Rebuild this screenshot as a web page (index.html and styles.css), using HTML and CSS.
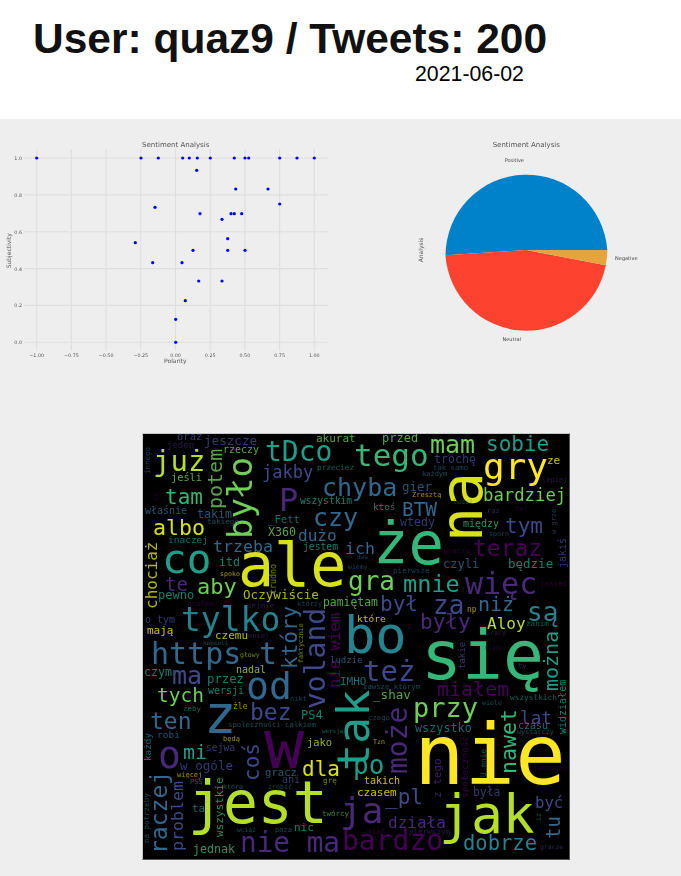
FILE: index.html
```html
<!DOCTYPE html>
<html lang="pl">
<head>
<meta charset="utf-8">
<title>User: quaz9 / Tweets: 200</title>
<link rel="stylesheet" href="styles.css">
</head>
<body>
<header class="head">
  <h1 class="title">User: quaz9 / Tweets: 200</h1>
  <div class="date">2021-06-02</div>
</header>
<main class="panel">
  <section class="charts">
    <svg class="chart" width="340" height="258" viewBox="0 119 340 258">
      <g class="grid">
        <line x1="36.7" y1="149" x2="36.7" y2="351"/><line x1="71.4" y1="149" x2="71.4" y2="351"/><line x1="106.1" y1="149" x2="106.1" y2="351"/><line x1="140.8" y1="149" x2="140.8" y2="351"/><line x1="175.5" y1="149" x2="175.5" y2="351"/><line x1="210.2" y1="149" x2="210.2" y2="351"/><line x1="244.9" y1="149" x2="244.9" y2="351"/><line x1="279.6" y1="149" x2="279.6" y2="351"/><line x1="314.3" y1="149" x2="314.3" y2="351"/>
        <line x1="24" y1="158" x2="328" y2="158"/><line x1="24" y1="194.9" x2="328" y2="194.9"/><line x1="24" y1="231.7" x2="328" y2="231.7"/><line x1="24" y1="268.6" x2="328" y2="268.6"/><line x1="24" y1="305.4" x2="328" y2="305.4"/><line x1="24" y1="342.3" x2="328" y2="342.3"/>
      </g>
      <text class="plot-title" x="175.7" y="146.8">Sentiment Analysis</text>
      <g class="tick tick-x">
        <text x="36.7" y="356.8">−1.00</text><text x="71.4" y="356.8">−0.75</text><text x="106.1" y="356.8">−0.50</text><text x="140.8" y="356.8">−0.25</text><text x="175.5" y="356.8">0.00</text><text x="210.2" y="356.8">0.25</text><text x="244.9" y="356.8">0.50</text><text x="279.6" y="356.8">0.75</text><text x="314.3" y="356.8">1.00</text>
      </g>
      <g class="tick tick-y">
        <text x="22" y="160">1.0</text><text x="22" y="196.9">0.8</text><text x="22" y="233.7">0.6</text><text x="22" y="270.6">0.4</text><text x="22" y="307.4">0.2</text><text x="22" y="344.3">0.0</text>
      </g>
      <text class="axis-label" x="175.3" y="363.4">Polarity</text>
      <text class="axis-label" x="11.4" y="250.7" transform="rotate(-90 11.4 250.7)">Subjectivity</text>
      <g class="dots">
        <circle cx="36.7" cy="158" r="1.6"/><circle cx="141" cy="158" r="1.6"/><circle cx="158.3" cy="158" r="1.6"/><circle cx="182.7" cy="158" r="1.6"/><circle cx="189.3" cy="158" r="1.6"/><circle cx="197.3" cy="158" r="1.6"/><circle cx="210.3" cy="158" r="1.6"/><circle cx="234.3" cy="158" r="1.6"/><circle cx="245" cy="158" r="1.6"/><circle cx="248.7" cy="158" r="1.6"/><circle cx="279.7" cy="158" r="1.6"/><circle cx="297" cy="158" r="1.6"/><circle cx="314.3" cy="158" r="1.6"/>
        <circle cx="196.7" cy="170.3" r="1.6"/><circle cx="235.7" cy="189" r="1.6"/><circle cx="268" cy="189" r="1.6"/><circle cx="279.7" cy="204" r="1.6"/><circle cx="155" cy="207.3" r="1.6"/><circle cx="200" cy="213.7" r="1.6"/><circle cx="231" cy="213.7" r="1.6"/><circle cx="234.3" cy="213.7" r="1.6"/><circle cx="241.7" cy="213.7" r="1.6"/><circle cx="222" cy="219.3" r="1.6"/><circle cx="227.7" cy="238.7" r="1.6"/><circle cx="135.3" cy="242.7" r="1.6"/><circle cx="193" cy="250.3" r="1.6"/><circle cx="227.7" cy="250.3" r="1.6"/><circle cx="245" cy="250.3" r="1.6"/><circle cx="152.7" cy="262.7" r="1.6"/><circle cx="182" cy="262.7" r="1.6"/><circle cx="198.7" cy="281" r="1.6"/><circle cx="222" cy="281" r="1.6"/><circle cx="185.3" cy="300.7" r="1.6"/><circle cx="175.7" cy="319.3" r="1.6"/><circle cx="175.7" cy="342.3" r="1.6"/>
      </g>
    </svg>
    <svg class="chart" width="341" height="258" viewBox="340 119 341 258">
      <text class="plot-title" x="526.3" y="146.8">Sentiment Analysis</text>
      <path class="slice-pos" d="M526.3 250 L607.3 250 A81 81 0 0 0 445.5 255.3 Z"/>
      <path class="slice-neu" d="M526.3 250 L445.5 255.3 A81 81 0 0 0 605.8 265.3 Z"/>
      <path class="slice-neg" d="M526.3 250 L605.8 265.3 A81 81 0 0 0 607.3 250 Z"/>
      <text class="pie-label" x="514.3" y="162">Positive</text>
      <text class="pie-label" x="511.7" y="341">Neutral</text>
      <text class="pie-label" x="626.3" y="260.2">Negative</text>
      <text class="axis-label" x="422.7" y="250" transform="rotate(-90 422.7 250)">Analysis</text>
    </svg>
  </section>
  <figure class="cloud">
    <svg class="cloud-art" width="426" height="425" viewBox="143 433 426 425">
      <g class="word">
        <text class="v2 m" x="177" y="439" font-size="10.5">oraz</text>
        <text class="v2 m" x="204" y="444" font-size="12.6">jeszcze</text>
        <text class="v7 m" x="316" y="441" font-size="11">akurat</text>
        <text class="v1 s" x="167" y="447" font-size="9">jeden</text>
        <text class="v7 m" x="223" y="452" font-size="10">rzeczy</text>
        <text class="v3 s" x="150" y="473" font-size="7.5" transform="rotate(-90 150 473)">innego</text>
        <text class="v8" x="153" y="470" font-size="29">już</text>
        <text class="v7 m" x="222" y="508" font-size="20" transform="rotate(-90 222 508)">potem</text>
        <text class="v7" x="252" y="538" font-size="34" transform="rotate(-90 252 538)">było</text>
        <text class="v5" x="265" y="460" font-size="28">tDco</text>
        <text class="v6" x="354" y="465" font-size="31">tego</text>
        <text class="v2" x="262" y="477" font-size="17">jakby</text>
        <text class="v5 s" x="317" y="469" font-size="7.7">przeciez</text>
        <text class="v7 m" x="171" y="480" font-size="10.3">jeśli</text>
        <text class="v6" x="165" y="503" font-size="21">tam</text>
        <text class="v1" x="279" y="510" font-size="32">P</text>
        <text class="v3" x="322" y="495" font-size="25">chyba</text>
        <text class="v5 m" x="300" y="503" font-size="9.6">wszystkim</text>
        <text class="v0 s" x="158" y="500" font-size="7" transform="rotate(-90 158 500)">or</text>
        <text class="v3 m" x="145" y="513" font-size="10">właśnie</text>
        <text class="v3" x="313" y="525" font-size="25">czy</text>
        <text class="v3 m" x="197" y="517" font-size="11.6">takim</text>
        <text class="v4 m" x="268" y="522" font-size="10.6">_Fett</text>
        <text class="v4 s" x="207" y="523" font-size="7.6">takiego</text>
        <text class="v85" x="153" y="534" font-size="21.6">albo</text>
        <text class="v7 m" x="268" y="535" font-size="11.7">X360</text>
        <text class="v3" x="298" y="540" font-size="16">dużo</text>
        <text class="v4 m" x="168" y="542" font-size="9.5">inaczej</text>
        <text class="v3" x="213" y="551" font-size="16.6">trzeba</text>
        <text class="v85 m" x="157" y="608" font-size="16" transform="rotate(-90 157 608)">chociaż</text>
        <text class="v5 m" x="303" y="549" font-size="9.7">jestem</text>
        <text class="v3" x="345" y="553" font-size="16.6">ich</text>
        <text class="v5" x="162" y="572" font-size="41">co</text>
        <text class="v85" x="238" y="585" font-size="60">ale</text>
        <text class="v5 m" x="219" y="565" font-size="11.6">itd</text>
        <text class="v9 s" x="220" y="575" font-size="6.6">spoko</text>
        <text class="v1" x="165" y="590" font-size="19">te</text>
        <text class="v7" x="197" y="593" font-size="22">aby</text>
        <text class="v8 s" x="276" y="593" font-size="8.3" transform="rotate(-90 276 593)">trudno</text>
        <text class="v85 m" x="243" y="598" font-size="12.6">Oczywiście</text>
        <text class="v5 m" x="158" y="598" font-size="12">pewno</text>
        <text class="v0 s" x="187" y="605" font-size="7.5">grałem</text>
        <text class="v1 s" x="247" y="607" font-size="7.5">sejmie</text>
        <text class="v3 s" x="297" y="605" font-size="7">którzy</text>
        <text class="v7 m" x="323" y="605" font-size="11.4">pamiętam</text>
        <text class="v4" x="181" y="630" font-size="33">tylko</text>
        <text class="v3" x="297" y="668" font-size="21" transform="rotate(-90 297 668)">który</text>
        <text class="v2" x="325" y="708" font-size="28" transform="rotate(-90 325 708)">voland</text>
        <text class="v0" x="340" y="687" font-size="15.6" transform="rotate(-90 340 687)">nie wiem</text>
        <text class="v2 m" x="145" y="622" font-size="10">o tym</text>
        <text class="v9 m" x="147" y="633" font-size="11">mają</text>
        <text class="v85 m" x="215" y="638" font-size="11">czemu</text>
        <text class="v1 s" x="248" y="637" font-size="7">mniej</text>
        <text class="v4 s" x="203" y="644" font-size="6">konsoli</text>
        <text class="v8 s" x="303" y="662" font-size="6.6" transform="rotate(-90 303 662)">faktycznie</text>
        <text class="v3" x="151" y="663" font-size="30">https</text>
        <text class="v3" x="259" y="663" font-size="30">t</text>
        <text class="v8 s" x="240" y="656" font-size="6.5">głowy</text>
        <text class="v5 m" x="144" y="675" font-size="11.6">czym</text>
        <text class="v2" x="172" y="683" font-size="25">ma</text>
        <text class="v5 m" x="207" y="682" font-size="12.3">przez</text>
        <text class="v8 m" x="236" y="672" font-size="10">nadal</text>
        <text class="v3" x="246" y="698" font-size="38">od</text>
        <text class="v7" x="157" y="701" font-size="19.5">tych</text>
        <text class="v5 m" x="208" y="693" font-size="10">wersji</text>
        <text class="v3 m" x="330" y="662" font-size="9">ludzie</text>
        <text class="v4 m" x="340" y="684" font-size="11">IMHO</text>
        <text class="v3 s" x="290" y="700" font-size="7">nikt</text>
        <text class="v5 s" x="183" y="710" font-size="7.5">żeby</text>
        <text class="v9 s" x="233" y="708" font-size="8">żle</text>
        <text class="v3" x="204" y="732" font-size="54">z</text>
        <text class="v2" x="250" y="719" font-size="23">bez</text>
        <text class="v5 m" x="301" y="718" font-size="12">PS4</text>
        <text class="v3" x="150" y="728" font-size="23">ten</text>
        <text class="v4 s" x="228" y="726" font-size="7.3">spoleczności calkiem</text>
        <text class="v5 s" x="322" y="732" font-size="6">wersję</text>
        <text class="v3 m" x="157" y="737" font-size="9.5">robi</text>
        <text class="v9 s" x="223" y="740" font-size="7">będą</text>
        <text class="v4 m" x="151" y="760" font-size="9.3" transform="rotate(-90 151 760)">każdy</text>
        <text class="v8 m" x="307" y="745" font-size="10.4">jako</text>
        <text class="v2 m" x="206" y="750" font-size="9.7">sejwa</text>
        <text class="v2" x="259" y="780" font-size="21" transform="rotate(-90 259 780)">coś</text>
        <text class="v1" x="158" y="767" font-size="38">o</text>
        <text class="v5" x="183" y="758" font-size="20">mi</text>
        <text class="v0" x="264" y="767" font-size="67">w</text>
        <text class="v85" x="302" y="775" font-size="21">dla</text>
        <text class="v2 m" x="180" y="769" font-size="12.6">w ogóle</text>
        <text class="v3 m" x="265" y="775" font-size="10.6">gracz</text>
        <text class="v2 m" x="282" y="782" font-size="10">ani</text>
        <text class="v9 s" x="177" y="776" font-size="7">więcej</text>
        <text class="v3" x="167" y="853" font-size="23" transform="rotate(-90 167 853)">raczej</text>
        <text class="v5 s" x="190" y="783" font-size="7">PS5</text>
        <text class="v8" x="188" y="822" font-size="58">jest</text>
        <text class="v4 s" x="223" y="788" font-size="6.7">która</text>
        <text class="v3 s" x="268" y="788" font-size="6.7">zrobić</text>
        <text class="v8 s" x="323" y="782" font-size="7.7">grę</text>
        <text class="v2" x="183" y="850" font-size="16.6" transform="rotate(-90 183 850)">problem</text>
        <text class="v6 m" x="223" y="836" font-size="11" transform="rotate(-90 223 836)">wszystkie</text>
        <text class="v4 m" x="192" y="811" font-size="11">ta</text>
        <text class="v7 s" x="322" y="815" font-size="7.5">twórcy</text>
        <text class="v4 s" x="149" y="842" font-size="7.5" transform="rotate(-90 149 842)">na potrzeby</text>
        <text class="v4 s" x="237" y="831" font-size="6.3">wciąż</text>
        <text class="v4 s" x="275" y="831" font-size="7">poza</text>
        <text class="v5 m" x="294" y="830" font-size="11">nic</text>
        <text class="v6 m" x="193" y="852" font-size="11.6">jednak</text>
        <text class="v1" x="240" y="851" font-size="27.7">nie ma</text>
        <text class="v0" x="342" y="849" font-size="28">bardzo</text>
        <text class="v1" x="340" y="822" font-size="36">ja</text>
        <text class="v2" x="385" y="803" font-size="21">_pl</text>
        <text class="v5" x="369" y="770" font-size="45" transform="rotate(-90 369 770)">tak</text>
        <text class="v5" x="353" y="773" font-size="26">po</text>
        <text class="v1" x="407" y="773" font-size="28" transform="rotate(-90 407 773)">może</text>
        <text class="v2" x="363" y="680" font-size="29">też</text>
        <text class="v6" x="421" y="678" font-size="68">się</text>
        <text class="v4" x="344" y="652" font-size="52">bo</text>
        <text class="v0" x="437" y="695" font-size="20">miałem</text>
        <text class="v2 m" x="465" y="668" font-size="9" transform="rotate(-90 465 668)">takie</text>
        <text class="v0 s" x="485" y="648" font-size="6">nigdy</text>
        <text class="v2 s" x="518" y="667" font-size="7">ty</text>
        <text class="v5" x="558" y="690" font-size="20" transform="rotate(-90 558 690)">można</text>
        <text class="v5 m" x="566" y="733" font-size="10" transform="rotate(-90 566 733)">widziałem</text>
        <text class="v5 s" x="510" y="699" font-size="7.8">wszystkich</text>
        <text class="v7 m" x="373" y="698" font-size="12.6">_shav</text>
        <text class="v4 s" x="363" y="688" font-size="7.3">zawsze którym</text>
        <text class="v4 s" x="482" y="704" font-size="6.6">wiele</text>
        <text class="v7" x="413" y="716" font-size="27">przy</text>
        <text class="v6" x="516" y="773" font-size="21.6" transform="rotate(-90 516 773)">nawet</text>
        <text class="v2" x="520" y="723" font-size="17.7">lat</text>
        <text class="v3 s" x="368" y="719" font-size="7.3">czego</text>
        <text class="v4 m" x="415" y="731" font-size="11.8">wszystko</text>
        <text class="v4 m" x="518" y="728" font-size="10">czasu</text>
        <text class="v4 s" x="517" y="733" font-size="6.8">wystarczy</text>
        <text class="v9 s" x="373" y="743" font-size="6.6">Tzn</text>
        <text class="v0 m" x="468" y="797" font-size="9.4" transform="rotate(-90 468 797)">społeczność</text>
        <text class="v1 m" x="441" y="797" font-size="11" transform="rotate(-90 441 797)">z tego</text>
        <text class="v4 s" x="486" y="776" font-size="7.8" transform="rotate(-90 486 776)">U mnie</text>
        <text class="v9" x="414" y="783" font-size="84">nie</text>
        <text class="v0 s" x="533" y="769" font-size="7">jakiegoś</text>
        <text class="v9 m" x="364" y="783" font-size="10">takich</text>
        <text class="v9 m" x="357" y="795" font-size="11">czasem</text>
        <text class="v2 m" x="473" y="795" font-size="11.4">była</text>
        <text class="v2" x="535" y="807" font-size="15.6">być</text>
        <text class="v8" x="439" y="832" font-size="53">jak</text>
        <text class="v3" x="560" y="838" font-size="19" transform="rotate(-90 560 838)">tu</text>
        <text class="v5 s" x="541" y="820" font-size="6.6" transform="rotate(-90 541 820)">iż</text>
        <text class="v1" x="388" y="827" font-size="16">działa</text>
        <text class="v0 s" x="367" y="833" font-size="7.6">miał</text>
        <text class="v1 s" x="409" y="833" font-size="7.6">pierwszym</text>
        <text class="v4" x="463" y="849" font-size="20.5">dobrze</text>
        <text class="v2 s" x="540" y="848" font-size="6.4">gracze</text>
        <text class="v7 m" x="382" y="441" font-size="12">przed</text>
        <text class="v7" x="430" y="452" font-size="25">mam</text>
        <text class="v5" x="486" y="450" font-size="21">sobie</text>
        <text class="v9" x="483" y="478" font-size="36">gry</text>
        <text class="v9 m" x="547" y="463" font-size="11">ze</text>
        <text class="v2 m" x="434" y="462" font-size="11.6">trochę</text>
        <text class="v3 s" x="433" y="469" font-size="7.3">tak samo</text>
        <text class="v4 s" x="422" y="475" font-size="7">każdym</text>
        <text class="v85" x="482" y="541" font-size="58" transform="rotate(-90 482 541)">na</text>
        <text class="v1 s" x="542" y="481" font-size="7">lepiej</text>
        <text class="v3 m" x="402" y="490" font-size="12.5">gier</text>
        <text class="v7" x="483" y="500" font-size="17.3">bardziej</text>
        <text class="v9 s" x="412" y="496" font-size="7">Zresztą</text>
        <text class="v5 m" x="373" y="509" font-size="9.3">ktoś</text>
        <text class="v3" x="402" y="515" font-size="19.4">BTW</text>
        <text class="v3 s" x="453" y="503" font-size="6.6">ludzi</text>
        <text class="v2 s" x="487" y="512" font-size="7">raz</text>
        <text class="v0 s" x="515" y="510" font-size="7">tej</text>
        <text class="v2" x="505" y="532" font-size="21">tym</text>
        <text class="v2 m" x="400" y="525" font-size="11.6">wtedy</text>
        <text class="v6 m" x="463" y="526" font-size="10">między</text>
        <text class="v3 s" x="489" y="535" font-size="6.6">sporo</text>
        <text class="v2 m" x="566" y="567" font-size="10" transform="rotate(-90 566 567)">jakiś</text>
        <text class="v3 s" x="556" y="533" font-size="7" transform="rotate(-90 556 533)">w grze</text>
        <text class="v6" x="373" y="563" font-size="59">że</text>
        <text class="v0" x="473" y="555" font-size="23">teraz</text>
        <text class="v0 s" x="443" y="552" font-size="7.4">gracza</text>
        <text class="v3 m" x="443" y="567" font-size="12">czyli</text>
        <text class="v5 m" x="508" y="567" font-size="12.5">będzie</text>
        <text class="v3 s" x="393" y="572" font-size="7.6">pierwsze</text>
        <text class="v3 s" x="357" y="558" font-size="6">dwa</text>
        <text class="v3 s" x="348" y="568" font-size="6.5">wiemy</text>
        <text class="v7" x="348" y="589" font-size="26">gra</text>
        <text class="v5" x="403" y="591" font-size="23.6">mnie</text>
        <text class="v1" x="465" y="593" font-size="30">więc</text>
        <text class="v0 s" x="540" y="585" font-size="7.5">jakieś</text>
        <text class="v2" x="380" y="610" font-size="21">był</text>
        <text class="v2" x="433" y="613" font-size="26">za</text>
        <text class="v3" x="478" y="610" font-size="20">niż</text>
        <text class="v4" x="527" y="620" font-size="26">są</text>
        <text class="v9 s" x="467" y="611" font-size="8">np</text>
        <text class="v9 m" x="357" y="621" font-size="9.5">które</text>
        <text class="v1" x="420" y="628" font-size="21">były</text>
        <text class="v8" x="487" y="628" font-size="16">Aloy</text>
        <text class="v5 s" x="526" y="625" font-size="7.6">zanim</text>
        <text class="v0 s" x="407" y="628" font-size="8">u</text>
        <text class="v1 s" x="486" y="634" font-size="6.6">pracy</text>
      </g>
    </svg>
  </figure>
</main>
</body>
</html>
```

FILE: styles.css
```css
html, body {
  margin: 0;
  padding: 0;
  overflow: hidden;
}
body {
  background: #eeeeee;
  font-family: "Liberation Sans", Arial, sans-serif;
  color: #000;
}
.head {
  background: #fff;
  height: 119px;
  padding-left: 33px;
  box-sizing: border-box;
  padding-top: 15px;
}
.title {
  margin: 0;
  font-size: 42.5px;
  line-height: 48px;
  font-weight: 700;
  color: #111;
}
.date {
  margin-left: 382px;
  margin-top: -1px;
  font-size: 21.3px;
  line-height: 24px;
}
.panel {
  background: #eeeeee;
}
.charts {
  display: flex;
}
.chart {
  display: block;
  filter: blur(0.3px);
}
.grid line {
  stroke: #dedede;
  stroke-width: 1.1;
}
.plot-title {
  font: 7px "DejaVu Sans", sans-serif;
  fill: #555;
  text-anchor: middle;
}
.tick text {
  font: 4.8px "DejaVu Sans", sans-serif;
  fill: #555;
}
.tick-x text {
  text-anchor: middle;
}
.tick-y text {
  text-anchor: end;
}
.axis-label {
  font: 6px "DejaVu Sans", sans-serif;
  fill: #555;
  text-anchor: middle;
}
.pie-label {
  font: 5px "DejaVu Sans", sans-serif;
  fill: #444;
  text-anchor: middle;
}
.dots circle {
  fill: #0000ff;
}
.slice-pos { fill: #0082cb; }
.slice-neu { fill: #fd432f; }
.slice-neg { fill: #e6a53c; }
.cloud {
  margin: 56px 0 0 142px;
  width: 426px;
  height: 425px;
  border: 1px solid #c8c8c8;
  border-right-color: #555;
  border-bottom-color: #555;
  background: #000;
}
.cloud-art {
  display: block;
  background: #000;
  filter: blur(0.6px);
}
.word text {
  font-family: "DejaVu Sans Mono", monospace;
}
.word .s { fill-opacity: 0.6; }
.word .m { fill-opacity: 0.8; }
.v0 { fill: #440154; }
.v1 { fill: #482878; }
.v2 { fill: #3e4989; }
.v3 { fill: #31688e; }
.v4 { fill: #26828e; }
.v5 { fill: #1f9e89; }
.v6 { fill: #35b779; }
.v7 { fill: #6ece58; }
.v8 { fill: #b5de2b; }
.v85 { fill: #d8e219; }
.v9 { fill: #fde725; }
```
